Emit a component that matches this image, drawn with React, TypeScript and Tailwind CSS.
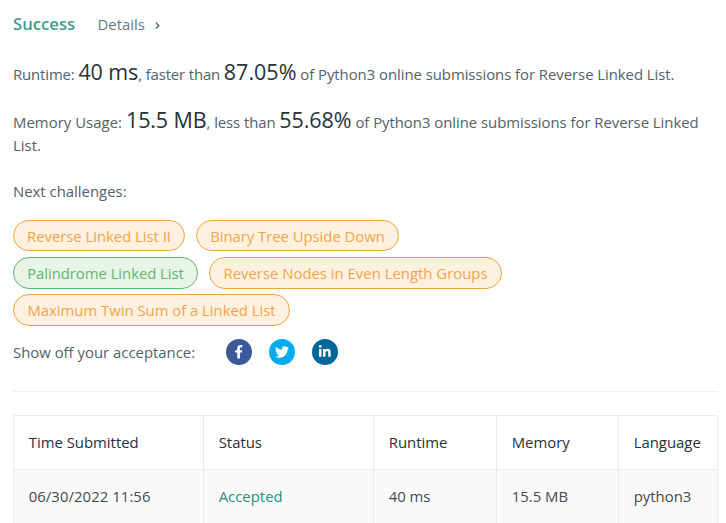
import { FaFacebookF, FaTwitter, FaLinkedinIn } from "react-icons/fa";

const pill = "flex items-center justify-center whitespace-nowrap rounded-full border pt-px";
const orange = "border-[#eda440] bg-[#fff1e0] text-[#f2a44b]";
const green = "border-[#6bb176] bg-[#e6f5e8] text-[#66b56f]";
const big = "text-[21.5px] text-[#263238]";
const circle = "flex h-[26px] w-[26px] items-center justify-center rounded-full text-white";

export default function App() {
  return (
    <main className="h-[523px] w-[726px] overflow-hidden bg-white pl-[13px] font-['Open_Sans','Noto_Sans',sans-serif] text-[14.9px] text-[#546268]">
      <div className="flex h-[48px] items-center whitespace-nowrap">
        <h1 className="w-[84.5px] text-[16.7px] font-semibold text-[#419d8e]"><span>Success</span></h1>
        <a className="flex items-center pt-px text-[#607d8b]">
          <span>Details</span>
          <svg className="ml-[10px] mt-[3px] h-[7px] w-[5px]" viewBox="0 0 5 7" fill="none" stroke="#546e7a" strokeWidth="1.4"><path d="M.8.5 3.8 3.5.8 6.5" /></svg>
        </a>
      </div>
      <p className="flex h-[48px] items-baseline whitespace-pre leading-[48px]">
        <span className="tracking-[-0.12px]">Runtime: </span><span className={`${big} tracking-[-0.1px]`}>40 ms</span><span className="tracking-[-0.13px]">, faster than </span><span className={big}>87.05%</span><span className="tracking-[-0.04px]"> of Python3 online submissions for Reverse Linked List.</span>
      </p>
      <div className="h-[84px]">
        <p className="flex h-[38px] items-baseline whitespace-pre leading-[48px]">
          <span className="tracking-[0.04px]">Memory Usage: </span><span className={`${big} tracking-[-0.1px]`}>15.5 MB</span><span className="tracking-[-0.08px]">, less than </span><span className={`${big} tracking-[-0.05px]`}>55.68%</span><span className="tracking-[-0.03px]"> of Python3 online submissions for Reverse Linked</span>
        </p>
        <p className="leading-[23px]">List.</p>
      </div>
      <p className="h-[40px] leading-[23px]"><span>Next challenges:</span></p>
      <div className="flex flex-col gap-[5px]">
        <div className="flex h-[32px] items-start gap-[11px]">
          <a className={`${pill} ${orange} h-[31px] w-[172px] tracking-[-0.04px]`}><span>Reverse Linked List II</span></a>
          <a className={`${pill} ${orange} h-[31px] w-[203px] tracking-[-0.05px]`}><span>Binary Tree Upside Down</span></a>
        </div>
        <div className="flex h-[32px] gap-[11px]">
          <a className={`${pill} ${green} w-[185px] tracking-[-0.05px]`}><span>Palindrome Linked List</span></a>
          <a className={`${pill} ${orange} w-[293px]`}><span>Reverse Nodes in Even Length Groups</span></a>
        </div>
        <div className="flex h-[32px]">
          <a className={`${pill} ${orange} w-[277px] tracking-[-0.03px]`}><span>Maximum Twin Sum of a Linked List</span></a>
        </div>
      </div>
      <div className="flex h-[53px] items-center">
        <p className="w-[212.6px] whitespace-nowrap"><span>Show off your acceptance:</span></p>
        <div className="flex gap-[17px] pb-px">
          <a className={`${circle} bg-[#3b5998]`}><FaFacebookF size={13.5} /></a>
          <a className={`${circle} bg-[#00aced]`}><FaTwitter size={14} /></a>
          <a className={`${circle} bg-[#00669c]`}><FaLinkedinIn size={13.5} /></a>
        </div>
      </div>
      <hr className="mt-[12px] w-[705px] border-[#eeeeee]" />
      <table className="mt-[23px] w-[705px] table-fixed border-collapse text-left">
        <colgroup><col className="w-[190px]" /><col className="w-[170px]" /><col className="w-[123px]" /><col className="w-[122px]" /><col className="w-[99px]" /></colgroup>
        <thead>
          <tr className="h-[54px] text-[#263238] [&>th]:border [&>th]:border-[#ebebeb] [&>th]:pl-[14.7px] [&>th]:font-normal">
            <th><span>Time Submitted</span></th><th><span>Status</span></th><th><span>Runtime</span></th><th><span>Memory</span></th><th><span>Language</span></th>
          </tr>
        </thead>
        <tbody>
          <tr className="h-[54px] bg-[#fafafa] text-[#424b50] [&>td]:border [&>td]:border-[#ebebeb] [&>td]:pl-[14.7px]">
            <td><span className="tracking-[0.06px]">06/30/2022 11:56</span></td><td className="text-[#269080]"><span>Accepted</span></td><td><span>40 ms</span></td><td><span>15.5 MB</span></td><td><span>python3</span></td>
          </tr>
        </tbody>
      </table>
    </main>
  );
}
